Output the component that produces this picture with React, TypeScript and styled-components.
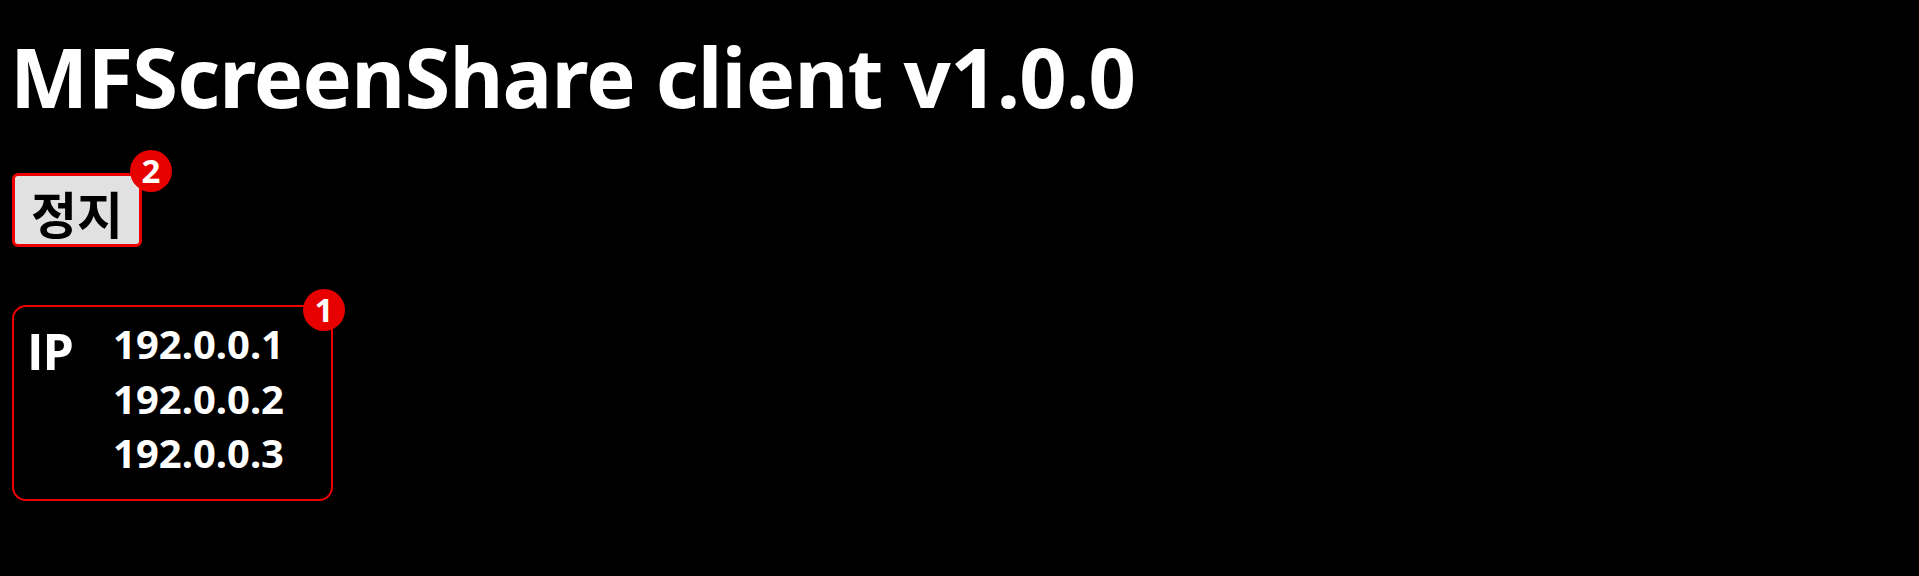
import styled, { createGlobalStyle } from 'styled-components';

const GlobalStyle = createGlobalStyle`
  body {
    margin: 8px;
    background: #000;
    color: #fff;
    font-family: "Noto Sans", "Noto Sans CJK KR", sans-serif;
  }
`;

const Page = styled.div`
  display: flex;
  flex-direction: column;
  align-items: flex-start;
`;

const Title = styled.h1`
  margin: 26px 0 0 2px;
  font-size: 83px;
  line-height: 1;
  font-weight: 700;
  letter-spacing: -0.8px;
`;

const BadgeWrap = styled.div`
  position: relative;
  display: inline-block;
`;

const Badge = styled.span<{ $top: number; $right: number }>`
  position: absolute;
  top: ${(p) => p.$top}px;
  right: ${(p) => p.$right}px;
  width: 42px;
  height: 42px;
  border-radius: 50%;
  background: #e60000;
  color: #fff;
  font-size: 33px;
  font-weight: 700;
  line-height: 42px;
  text-align: center;
`;

const StopButton = styled.button`
  margin: 0;
  width: 130px;
  height: 74px;
  padding: 0;
  background: #e1e1e1;
  color: #000;
  border: 3px solid #e00;
  border-radius: 6px;
  font-family: "Noto Sans CJK KR", sans-serif;
  font-size: 50px;
  font-weight: 700;
`;

const IpBox = styled.div`
  display: grid;
  grid-template-columns: 86px auto;
  width: 321px;
  height: 196px;
  box-sizing: border-box;
  padding: 10px 0 0 13px;
  border: 2.5px solid #e00;
  border-radius: 14px;
`;

const IpLabel = styled.div`
  margin-top: 9px;
  font-family: "Open Sans", sans-serif;
  font-size: 50px;
  font-weight: 700;
  line-height: 1;
  letter-spacing: -1px;
`;

const IpList = styled.ul`
  list-style: none;
  margin: 0;
  padding: 0;
`;

const IpItem = styled.li`
  font-size: 40px;
  font-weight: 700;
  line-height: 54.5px;
`;

const ButtonRow = styled.div`
  margin: 56px 0 0 4px;
`;

const BoxRow = styled.div`
  margin: 58px 0 0 4px;
`;

const ips = ['192.0.0.1', '192.0.0.2', '192.0.0.3'];

const App = () => {
  return (
    <Page>
      <GlobalStyle />
      <Title>MFScreenShare client v1.0.0</Title>
      <ButtonRow>
        <BadgeWrap>
          <StopButton>정지</StopButton>
          <Badge $top={-23} $right={-30}>2</Badge>
        </BadgeWrap>
      </ButtonRow>
      <BoxRow>
        <BadgeWrap>
          <IpBox>
            <IpLabel>IP</IpLabel>
            <IpList>
              {ips.map((ip) => (
                <IpItem key={ip}>{ip}</IpItem>
              ))}
            </IpList>
          </IpBox>
          <Badge $top={-16} $right={-12}>1</Badge>
        </BadgeWrap>
      </BoxRow>
    </Page>
  );
};

export default App;
